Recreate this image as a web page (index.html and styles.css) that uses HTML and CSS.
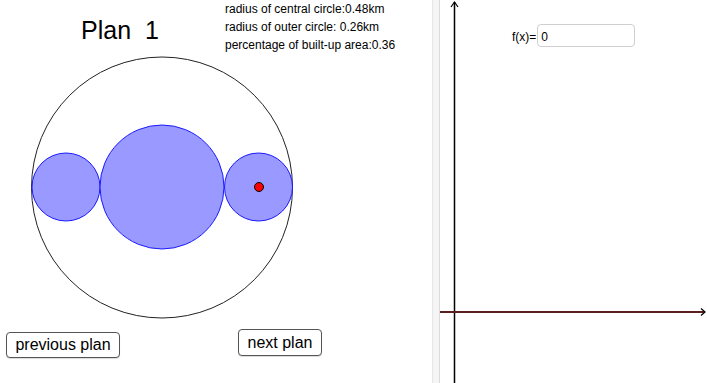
FILE: index.html
```html
<!DOCTYPE html>
<html lang="en">
<head>
    <meta charset="UTF-8">
    <meta name="viewport" content="width=device-width, initial-scale=1.0">
    <title>Plan 1</title>
    <link rel="stylesheet" href="styles.css">
</head>
<body>
    <div class="applet">
        <div class="plan-panel">
            <div class="plan-header">
                <h1 class="plan-title">Plan&nbsp; 1</h1>
                <div class="plan-info">
                    <p>radius of central circle:0.48km</p>
                    <p>radius of outer circle: 0.26km</p>
                    <p>percentage of built-up area:0.36</p>
                </div>
            </div>

            <svg class="plan-drawing" width="432" height="275" viewBox="0 50 432 275">
                <circle cx="162" cy="187.5" r="130.5" fill="none" stroke="#222" stroke-width="1"/>
                <circle cx="66" cy="187" r="34" fill="#9999ff" stroke="#1a1aff" stroke-width="1"/>
                <circle cx="162" cy="187" r="62" fill="#9999ff" stroke="#1a1aff" stroke-width="1"/>
                <circle cx="258.5" cy="187" r="34" fill="#9999ff" stroke="#1a1aff" stroke-width="1"/>
                <circle cx="259" cy="187" r="4.5" fill="#ff0000" stroke="#000" stroke-width="1"/>
            </svg>

            <div class="plan-buttons">
                <button class="plan-btn prev-btn">previous plan</button>
                <button class="plan-btn next-btn">next plan</button>
            </div>
        </div>

        <div class="divider"></div>

        <div class="graph-panel">
            <svg class="graph-axes" width="267" height="383" viewBox="440 0 267 383">
                <!-- y axis -->
                <line x1="454.5" y1="2" x2="454.5" y2="383" stroke="#000" stroke-width="1.5"/>
                <polyline points="451,7 454.5,2 458,7" fill="none" stroke="#000" stroke-width="1.2"/>
                <!-- x axis, covered by f(x)=0 -->
                <line x1="440" y1="312" x2="705" y2="312" stroke="#000" stroke-width="1.5"/>
                <line x1="440" y1="312" x2="703" y2="312" stroke="#5a1e1e" stroke-width="2"/>
                <polyline points="701,308.5 705,312 701,315.5" fill="none" stroke="#000" stroke-width="1.2"/>
            </svg>

            <div class="input-box">
                <label for="fx">f(x)=</label>
                <input id="fx" type="text" value="0">
            </div>
        </div>
    </div>
</body>
</html>
```

FILE: styles.css
```css
body {
    margin: 0;
    font-family: 'Liberation Sans', Arial, sans-serif;
    background-color: #fff;
    color: #000;
    overflow: hidden;
}

.applet {
    display: flex;
    width: 707px;
    height: 383px;
}

/* Left side: the plan */
.plan-panel {
    width: 432px;
    flex: 0 0 432px;
}

.plan-header {
    display: flex;
    height: 50px;
    padding-left: 81px;
}

.plan-title {
    flex: 0 0 144px;
    margin: 0;
    padding-top: 18px;
    font-size: 25px;
    font-weight: normal;
    line-height: 25px;
}

.plan-info p {
    margin: 0;
    font-size: 12px;
    line-height: 18px;
    white-space: nowrap;
}

.plan-drawing {
    display: block;
}

.plan-buttons {
    display: flex;
    align-items: flex-start;
    padding-left: 6px;
}

.plan-btn {
    font-family: 'Liberation Sans', Arial, sans-serif;
    font-size: 16px;
    color: #000;
    background-color: #fff;
    border: 1px solid #555;
    border-radius: 4px;
    padding: 0;
    box-shadow: 0 1px 1px rgba(0, 0, 0, 0.15);
    cursor: pointer;
}

.prev-btn {
    width: 114px;
    height: 26px;
    margin-top: 7px;
}

.next-btn {
    width: 84px;
    height: 27px;
    margin-top: 4px;
    margin-left: 118px;
}

/* Splitter */
.divider {
    flex: 0 0 6px;
    background-color: #f5f5f5;
    border-left: 1px solid #e6e6e6;
    border-right: 1px solid #dadada;
}

/* Right side: graphics view */
.graph-panel {
    position: relative;
    flex: 1;
}

.graph-axes {
    display: block;
}

.input-box {
    position: absolute;
    left: 72px;
    top: 24px;
    display: flex;
    align-items: center;
    font-size: 12px;
}

.input-box label {
    margin-right: 1px;
    padding-top: 3px;
}

.input-box input {
    width: 98px;
    height: 23px;
    box-sizing: border-box;
    border: 1px solid #cfcfcf;
    border-radius: 4px;
    padding: 2px 3px 0;
    font-family: 'Liberation Sans', Arial, sans-serif;
    font-size: 12px;
    outline: none;
}
```
